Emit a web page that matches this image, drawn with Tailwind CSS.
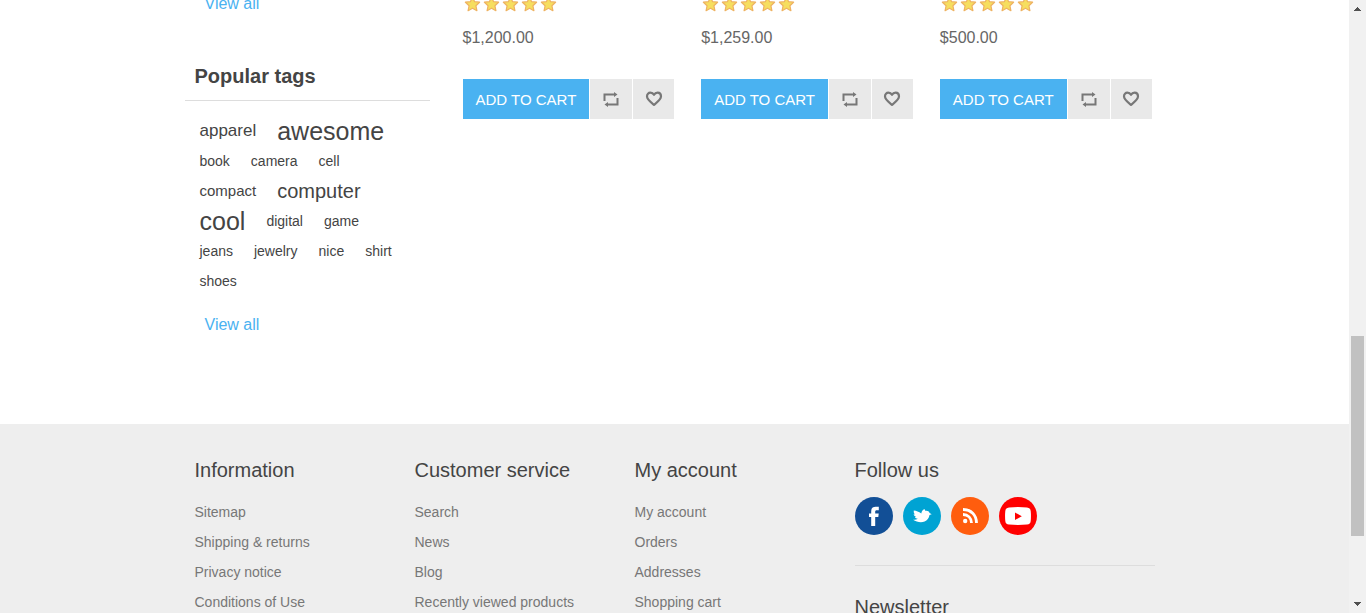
<!DOCTYPE html>
<html lang="en">
<head>
<meta charset="utf-8">
<meta name="viewport" content="width=device-width, initial-scale=1">
<title>Store</title>
<script src="https://cdn.jsdelivr.net/npm/@tailwindcss/browser@4"></script>
</head>
<body class="flex h-screen overflow-hidden bg-white font-['Liberation_Sans',Arial,sans-serif] text-sm text-[#444]">

<svg class="hidden" aria-hidden="true">
  <defs>
    <symbol id="star" viewBox="0 0 19 17">
      <path d="M9.500 1 11.600 5.700l5 .500-3.700 3.500 1 5-4.400-2.500L5.100 14.700l1-5L2.400 6.200l5-.500z" fill="#f6de5f" stroke="#eeb262" stroke-width="1.200" stroke-linejoin="round"/>
    </symbol>
    <symbol id="stars" viewBox="0 0 95 17">
      <use href="#star" x="0" width="19" height="17"/>
      <use href="#star" x="19" width="19" height="17"/>
      <use href="#star" x="38" width="19" height="17"/>
      <use href="#star" x="57" width="19" height="17"/>
      <use href="#star" x="76" width="19" height="17"/>
    </symbol>
    <symbol id="compare" viewBox="0 0 16 16">
      <path d="M.500 2.500H11V1l3.500 2.500L11 6V4.500H2.500V10h-2zM15.500 14.500H5V16l-3.500-2.500L5 11v1.500h8.500V7h2z" fill="#777"/>
    </symbol>
    <symbol id="heart" viewBox="0 0 18 16">
      <path d="M9 13.800C6.500 11.800 2 8.800 2 5.300 2 3.200 3.500 1.700 5.400 1.700c1.500 0 2.800.700 3.600 2.100.800-1.400 2.100-2.100 3.600-2.100C14.500 1.700 16 3.200 16 5.300c0 3.500-4.500 6.500-7 8.500z" fill="none" stroke="#777" stroke-width="2.200" stroke-linejoin="round"/>
    </symbol>
  </defs>
</svg>

<div class="min-w-0 flex-1 overflow-hidden">
  <div class="mx-auto flex h-[424px] max-w-[980px]">
    <aside class="w-[245px] shrink-0">
      <a href="#" class="-mt-2 ml-5 block text-base leading-6 text-[#4ab2f1]">View all</a>
      <h2 class="mt-12 border-b border-[#ddd] pb-3 pl-2.5 text-xl leading-6 font-bold">Popular tags</h2>
      <ul class="mt-[15px] mr-[25px] ml-[15px] flex flex-wrap gap-x-[21px] leading-[30px]">
        <li class="text-[17px]"><a href="#">apparel</a></li>
        <li class="text-[25px]"><a href="#">awesome</a></li>
        <li><a href="#">book</a></li>
        <li><a href="#">camera</a></li>
        <li><a href="#">cell</a></li>
        <li class="text-[15px]"><a href="#">compact</a></li>
        <li class="text-[20px]"><a href="#">computer</a></li>
        <li class="text-[25px]"><a href="#">cool</a></li>
        <li><a href="#">digital</a></li>
        <li><a href="#">game</a></li>
        <li><a href="#">jeans</a></li>
        <li><a href="#">jewelry</a></li>
        <li><a href="#">nice</a></li>
        <li><a href="#">shirt</a></li>
        <li><a href="#">shoes</a></li>
      </ul>
      <a href="#" class="mt-[17px] ml-5 block text-base leading-6 text-[#4ab2f1]">View all</a>
    </aside>

    <main class="mr-[13px] ml-[33px] grid flex-1 grid-cols-3 content-start gap-[27px]">
      <article>
        <svg class="-mt-1 h-[17px] w-[95px]" role="img" aria-label="5 stars"><use href="#stars"/></svg>
        <p class="mt-[13px] text-base leading-6 text-[#666]">$1,200.00</p>
        <div class="mt-[29px] grid h-10 grid-cols-[127fr_42fr_41fr] gap-px">
          <button class="bg-[#4ab2f1] pt-0.5 text-[15px] whitespace-nowrap text-white">ADD TO CART</button>
          <button class="flex items-center justify-center bg-[#e9e9e9]" aria-label="Add to compare list"><svg class="h-4 w-4"><use href="#compare"/></svg></button>
          <button class="flex items-center justify-center bg-[#e9e9e9]" aria-label="Add to wishlist"><svg class="h-4 w-[18px]"><use href="#heart"/></svg></button>
        </div>
      </article>
      <article>
        <svg class="-mt-1 h-[17px] w-[95px]" role="img" aria-label="5 stars"><use href="#stars"/></svg>
        <p class="mt-[13px] text-base leading-6 text-[#666]">$1,259.00</p>
        <div class="mt-[29px] grid h-10 grid-cols-[127fr_42fr_41fr] gap-px">
          <button class="bg-[#4ab2f1] pt-0.5 text-[15px] whitespace-nowrap text-white">ADD TO CART</button>
          <button class="flex items-center justify-center bg-[#e9e9e9]" aria-label="Add to compare list"><svg class="h-4 w-4"><use href="#compare"/></svg></button>
          <button class="flex items-center justify-center bg-[#e9e9e9]" aria-label="Add to wishlist"><svg class="h-4 w-[18px]"><use href="#heart"/></svg></button>
        </div>
      </article>
      <article>
        <svg class="-mt-1 h-[17px] w-[95px]" role="img" aria-label="5 stars"><use href="#stars"/></svg>
        <p class="mt-[13px] text-base leading-6 text-[#666]">$500.00</p>
        <div class="mt-[29px] grid h-10 grid-cols-[127fr_42fr_41fr] gap-px">
          <button class="bg-[#4ab2f1] pt-0.5 text-[15px] whitespace-nowrap text-white">ADD TO CART</button>
          <button class="flex items-center justify-center bg-[#e9e9e9]" aria-label="Add to compare list"><svg class="h-4 w-4"><use href="#compare"/></svg></button>
          <button class="flex items-center justify-center bg-[#e9e9e9]" aria-label="Add to wishlist"><svg class="h-4 w-[18px]"><use href="#heart"/></svg></button>
        </div>
      </article>
    </main>
  </div>

  <footer class="bg-[#eee] pt-8">
    <div class="mx-auto grid max-w-[980px] grid-cols-[1fr_1fr_1fr_300px] px-2.5">
      <section>
        <h2 class="text-xl leading-7">Information</h2>
        <ul class="mt-[13px] leading-[30px] text-[#777]">
          <li><a href="#">Sitemap</a></li>
          <li><a href="#">Shipping &amp; returns</a></li>
          <li><a href="#">Privacy notice</a></li>
          <li><a href="#">Conditions of Use</a></li>
        </ul>
      </section>
      <section>
        <h2 class="text-xl leading-7">Customer service</h2>
        <ul class="mt-[13px] leading-[30px] text-[#777]">
          <li><a href="#">Search</a></li>
          <li><a href="#">News</a></li>
          <li><a href="#">Blog</a></li>
          <li><a href="#">Recently viewed products</a></li>
        </ul>
      </section>
      <section>
        <h2 class="text-xl leading-7">My account</h2>
        <ul class="mt-[13px] leading-[30px] text-[#777]">
          <li><a href="#">My account</a></li>
          <li><a href="#">Orders</a></li>
          <li><a href="#">Addresses</a></li>
          <li><a href="#">Shopping cart</a></li>
        </ul>
      </section>
      <section>
        <h2 class="text-xl leading-7">Follow us</h2>
        <div class="mt-[13px] flex gap-2.5 border-b border-[#ddd] pb-[30px]">
          <a href="#" aria-label="Facebook"><svg class="block h-[38px] w-[38px]" viewBox="0 0 38 38"><circle cx="19" cy="19" r="19" fill="#124f96"/><path d="M16.200 29V20H14v-3.500h2.200v-2.300c0-2.900 1.600-4.400 4.500-4.400h3.100v3.500h-2c-1.200 0-1.600.500-1.600 1.500v1.700h3.500l-.400 3.500h-3.100v9z" fill="#fff"/></svg></a>
          <a href="#" aria-label="Twitter"><svg class="block h-[38px] w-[38px]" viewBox="0 0 38 38"><circle cx="19" cy="19" r="19" fill="#00a3d3"/><path d="M10.800 13.600c2.600.300 5 1.300 7.500 2.800.300-2 1.300-3.500 3.200-4.400.200.900.500 1.400 1.300 1.900 1.800-.200 3.300.500 3.800 2l2.100 1.300-2.200.800c-.500 3-2.300 5.400-4.900 6.500-3.700 1.300-8 .500-11.500-1.700 1.900.100 3.500-.200 4.600-1-1.400-.200-2.300-.800-2.800-1.800l1.200-.200c-1.500-.600-2.200-1.400-2.500-2.500l1.300.100c-1-.900-1.300-2.100-1.100-3.800z" fill="#fff"/></svg></a>
          <a href="#" aria-label="RSS"><svg class="block h-[38px] w-[38px]" viewBox="0 0 38 38"><circle cx="19" cy="19" r="19" fill="#ff5d0e"/><circle cx="14.200" cy="24" r="2.200" fill="#fff"/><path d="M12 17.500c5 0 8.500 3.500 8.500 8.500M12 12.500c8 0 13.500 5.500 13.500 13.500" fill="none" stroke="#fff" stroke-width="2.800"/></svg></a>
          <a href="#" aria-label="YouTube"><svg class="block h-[38px] w-[38px]" viewBox="0 0 38 38"><circle cx="19" cy="19" r="19" fill="#f00"/><path d="M10 10.400q9-.900 18 0 3.500.300 3.700 3.600.500 5 0 10-.200 3.300-3.700 3.600-9 .900-18 0-3.500-.300-3.700-3.600-.500-5 0-10 .200-3.300 3.700-3.600z" fill="#fff"/><path d="M16 15.500v7.500l6.800-3.700z" fill="#f00"/></svg></a>
        </div>
        <h2 class="mt-[27px] text-xl leading-7">Newsletter</h2>
      </section>
    </div>
  </footer>
</div>

<!-- Vertical scroll track -->
<div class="relative flex w-[17px] shrink-0 flex-col items-center justify-between bg-[#f1f1f1] py-[7px]" aria-hidden="true">
  <svg class="h-1 w-[7px]" viewBox="0 0 7 4" shape-rendering="crispEdges"><path d="M3 0h1v1h1v1h1v1h1v1H0V3h1V2h1V1h1z" fill="#505050"/></svg>
  <div class="absolute top-[336px] right-0.5 left-0.5 h-[200px] bg-[#c1c1c1]"></div>
  <svg class="h-1 w-[7px]" viewBox="0 0 7 4" shape-rendering="crispEdges"><path d="M0 0h7v1H6v1H5v1H4v1H3V3H2V2H1V1H0z" fill="#505050"/></svg>
</div>
</body>
</html>
